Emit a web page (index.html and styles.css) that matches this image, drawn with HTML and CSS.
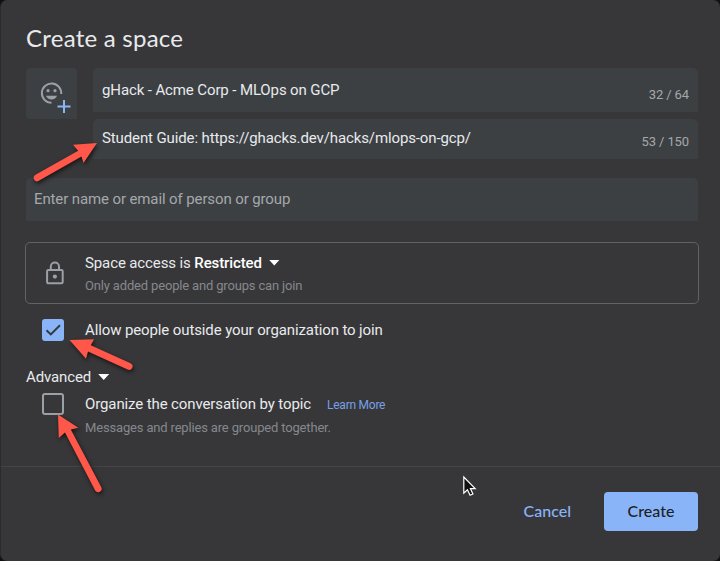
FILE: index.html
```html
<!DOCTYPE html>
<html lang="en">
<head>
<meta charset="utf-8">
<title>Create a space</title>
<link rel="stylesheet" href="styles.css">
</head>
<body>
<main class="dialog">
  <h1 class="title"><span>Create a space</span></h1>
  <section class="identity">
    <button class="emoji" aria-label="Add emoji">
      <svg width="51" height="51" viewBox="0 0 51 51" fill="none">
        <path d="M35.200 26A9.700 9.700 0 1 0 25.500 34.800" stroke="#9aa0a6" stroke-width="2"/>
        <circle cx="22" cy="22.700" r="1.600" fill="#9aa0a6"/>
        <circle cx="29" cy="22.700" r="1.600" fill="#9aa0a6"/>
        <path d="M20 27.800h11c-.8 2.300-2.900 3.700-5.500 3.700s-4.700-1.400-5.500-3.700z" fill="#9aa0a6"/>
        <path d="M38 32v13M31.500 38.500h13" stroke="#8ab4f8" stroke-width="2"/>
      </svg>
    </button>
    <div class="fields">
      <div class="field name"><span class="value">gHack - Acme Corp - MLOps on GCP</span><span class="count">32 / 64</span></div>
      <div class="field guide"><span class="value">Student Guide: https://ghacks.dev/hacks/mlops-on-gcp/</span><span class="count">53 / 150</span></div>
    </div>
  </section>
  <div class="field people"><span>Enter name or email of person or group</span></div>
  <section class="access">
    <svg class="lock" width="18" height="24" viewBox="0 0 18 24" fill="none" stroke="#9aa0a6" stroke-width="2">
      <rect x="1.100" y="9" width="15.600" height="13.300" rx="1.200"/>
      <path d="M4.800 9V5.500a4.100 4.100 0 0 1 8.200 0V9"/>
      <circle cx="8.900" cy="15.600" r="2.100" fill="#9aa0a6" stroke="none"/>
    </svg>
    <div class="lines">
      <div class="line"><span>Space access is <b>Restricted</b></span><i class="caret"></i></div>
      <div class="hint">Only added people and groups can join</div>
    </div>
  </section>
  <div class="option allow">
    <span class="box checked"><svg width="22" height="22" viewBox="0 0 22 22"><path d="M4.500 11.200l4.300 4.200L18 6.300" fill="none" stroke="#36383d" stroke-width="2"/></svg></span>
    <span>Allow people outside your organization to join</span>
  </div>
  <div class="advanced"><span>Advanced</span><i class="caret"></i></div>
  <div class="option topic">
    <span class="box"></span>
    <div class="lines">
      <div class="line"><span>Organize the conversation by topic</span><a class="learn">Learn More</a></div>
      <div class="hint">Messages and replies are grouped together.</div>
    </div>
  </div>
  <footer class="footer">
    <button class="cancel">Cancel</button>
    <button class="create">Create</button>
  </footer>
</main>
<svg class="marks" width="720" height="561" viewBox="0 0 720 561">
  <g class="arrows" fill="#ff5749">
    <path d="M97 143L73 144.800L78.200 150.800L35.500 174.800A3.400 3.400 0 0 0 38.800 180.800L81.500 156.500L83.500 163Z"/>
    <path d="M69.500 340L94 339.300L90.800 345.200L130.500 363.200A3.400 3.400 0 0 1 127.600 369.600L88 351.500L86 358.700Z"/>
    <path d="M58 414.500L78.300 427.800L70.800 429.500L101.300 487.200A3.500 3.500 0 0 1 95.200 490.600L65 432.500L58.800 438Z"/>
  </g>
  <path d="M463.800 477V493.200L467.400 489.800L470.100 495.200L472.900 494L470.400 488.600H475.200Z" fill="#111" stroke="#fff" stroke-width="1.200"/>
</svg>
</body>
</html>
```
FILE: styles.css
```css
* { box-sizing: border-box; }
body { margin: 0; background: #111; font-family: Roboto, sans-serif; font-size: 15px; letter-spacing: -.115px; color: #e8eaed; }
button { border: 0; padding: 0; font: inherit; letter-spacing: inherit; }
.dialog { width: 720px; height: 561px; padding: 23px 22px 0 25px; background: #373739; border-radius: 7px; border-left: 1px solid #2b2b2d; display: flex; flex-direction: column; overflow: hidden; }
.title { margin: 0; height: 45px; font: 400 24px/30px Lato, sans-serif; letter-spacing: .25px; }
.identity { display: flex; gap: 16px; height: 91px; }
.emoji { width: 51px; height: 51px; background: #3c4043; border-radius: 4px 4px 0 4px; }
.emoji svg { display: block; }
.fields { flex: 1; display: flex; flex-direction: column; gap: 7px; }
.field { background: #3c4043; border-radius: 5px 5px 0 0; display: flex; justify-content: space-between; padding: 0 9px; }
.name { height: 44px; }
.guide { height: 40px; }
.value { line-height: 20px; padding-top: 12px; }
.guide .value { padding-top: 9px; }
.count { font-size: 13px; line-height: 18px; padding-top: 18px; color: #a5a8ab; }
.guide .count { padding-top: 14px; }
.people { height: 43px; margin-top: 19px; padding-left: 8px; line-height: 42px; color: #a5a8ab; }
.access { height: 62px; margin: 21px -1px 0; border: 1.500px solid #5f6368; border-radius: 5px; display: flex; align-items: center; padding-left: 20px; gap: 21px; }
.line { display: flex; align-items: center; height: 22px; }
.access .lines { padding-top: 2px; }
.access .line { height: 23px; }
.caret { width: 11px; height: 6px; background: #fff; clip-path: polygon(0 0, 100% 0, 50% 100%); margin-left: 7px; }
.hint { height: 23px; line-height: 24px; font-size: 13px; letter-spacing: -.165px; color: #85888d; }
b { font-weight: 500; color: #fff; }
.option { display: flex; gap: 21px; padding-left: 16px; }
.allow { height: 22px; margin-top: 15px; line-height: 22px; }
.box { width: 22px; height: 22px; border: 2px solid #9aa0a6; border-radius: 3px; }
.checked { border: 0; background: #8ab4f8; }
.box svg { display: block; }
.advanced { height: 22px; margin-top: 25px; display: flex; align-items: center; }
.topic { margin-top: 5px; height: 73px; }
.topic .hint { line-height: 26px; }
.learn { font-size: 12px; letter-spacing: -.25px; color: #78a0e5; margin-left: 16px; padding-top: 1px; }
.footer { margin: 0 -22px 0 -25px; height: 95px; border-top: 1px solid #444446; display: flex; justify-content: flex-end; align-items: flex-start; padding: 25px 22px 0; gap: 33px; font: 500 16px/37px Lato, sans-serif; letter-spacing: 0; }
.footer button { height: 39px; padding-bottom: 2px; }
.cancel { color: #8ab4f8; background: none; }
.create { width: 94px; border-radius: 4px; background: #8ab4f8; color: #202124; }
.marks { position: absolute; left: 0; top: 0; pointer-events: none; }
.arrows { filter: drop-shadow(1px 2px 2px #151515); }
```
